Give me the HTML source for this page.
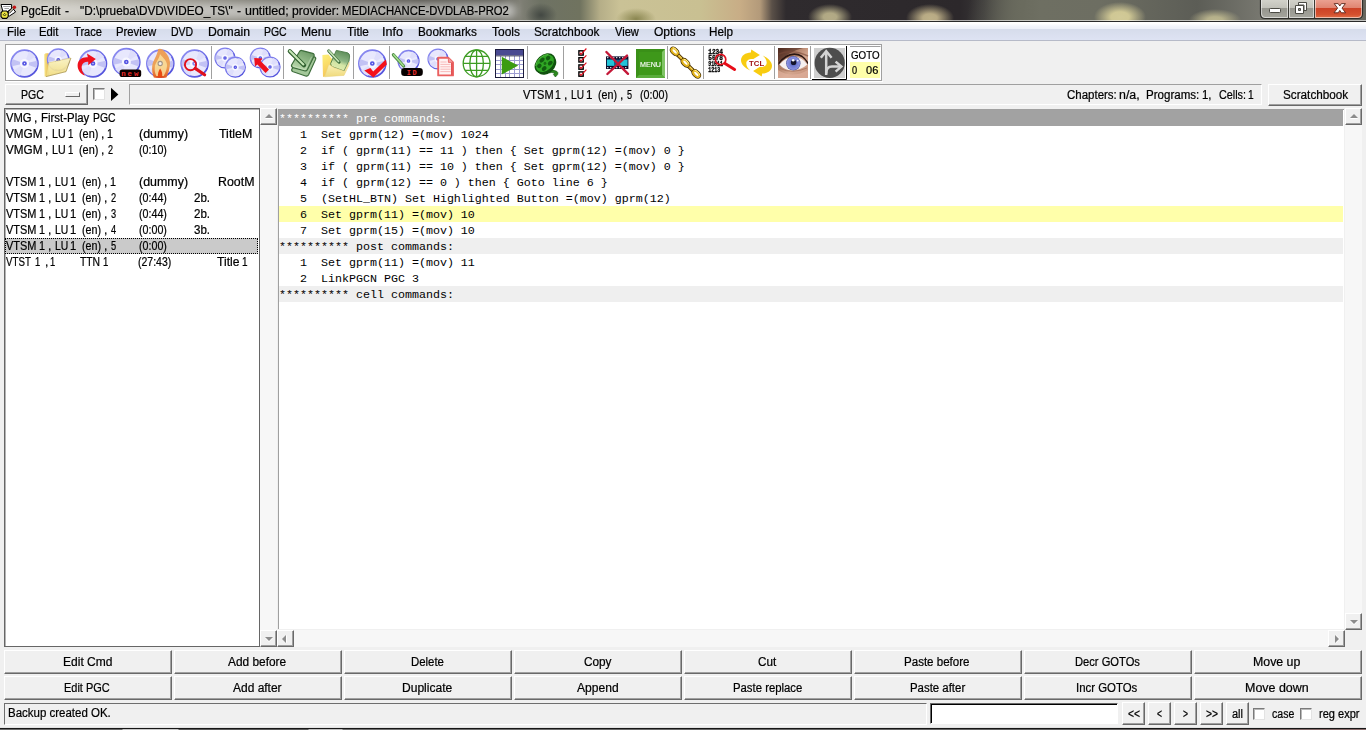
<!DOCTYPE html><html><head><meta charset="utf-8"><title>PgcEdit</title><style>*{box-sizing:border-box;margin:0;padding:0}
html,body{width:1366px;height:730px;overflow:hidden;background:#f0f0f0}
body{position:relative;font-family:"Liberation Sans",sans-serif;font-size:12px;color:#000}
.abs{position:absolute}
.w{position:absolute;white-space:pre;line-height:1;transform-origin:0 0;display:block;-webkit-text-stroke:.22px #000}
#title{left:0;top:0;width:1366px;height:21px;background:
radial-gradient(ellipse 22px 13px at 830px 17px,#b4ab86 0,#b0a884 30%,rgba(176,168,132,0) 100%),
radial-gradient(ellipse 24px 14px at 930px 18px,#bdb088 0,#b8aa84 30%,rgba(184,170,132,0) 100%),
radial-gradient(ellipse 26px 15px at 1120px 17px,#d2ca98 0,#cfc794 35%,rgba(207,199,148,0) 100%),
radial-gradient(ellipse 26px 11px at 1215px 20px,#bab58e 0,#b5b08a 30%,rgba(181,176,138,0) 100%),
radial-gradient(ellipse 16px 12px at 541px 15px,#434843 0,rgba(69,74,69,0) 100%),
radial-gradient(ellipse 20px 11px at 636px 19px,#8a8650 0,rgba(142,138,80,0) 100%),
linear-gradient(100deg,rgba(0,0,0,0) 0,rgba(0,0,0,0) 955px,#6a6b5e 1010px,rgba(106,107,94,0) 1011px),
linear-gradient(90deg,#c4c1b6 0,#bcb9af 60px,#a09d93 150px,#7e7c73 250px,#69675f 340px,#514f48 420px,#5a5951 500px,#7f7f75 520px,#6e7264 540px,#70735f 580px,#b5ae88 600px,#cac296 620px,#c9c092 700px,#c8ad86 740px,#b39a7a 760px,#5a5048 772px,#2f2b2e 786px,#2c282b 960px,#3a3838 985px,#6a6b5e 1022px,#6e6f62 1040px,#6d6e62 1100px,#5c5d56 1197px,#77776f 1260px,#66665e 1366px)}
#tl2{left:0;top:20px;width:1366px;height:1px;background:rgba(255,255,255,.6)}
#tline{left:0;top:21px;width:1366px;height:1px;background:#2a2a2a}
#glow{left:16px;top:3px;width:500px;height:16px;border-radius:8px;background:linear-gradient(90deg,rgba(255,255,255,.35) 0,rgba(255,255,255,.5) 40%,rgba(255,255,255,.58) 100%);filter:blur(4.5px)}
#menubar{left:0;top:22px;width:1366px;height:19px;background:linear-gradient(#ffffff 0,#ffffff 1.5px,#f3f5fb 4px,#eceff8 7px,#d6dceb 7.01px,#dee3f3 18px,#b6bac8 18.01px,#b6bac8 19px)}
.btn{position:absolute;background:#f0f0f0;border:1px solid;border-color:#fff #696969 #696969 #fff;box-shadow:inset -1px -1px 0 #a0a0a0}
.sunk{position:absolute;border:1px solid;border-color:#a0a0a0 #fff #fff #a0a0a0}
.chk{position:absolute;width:12px;height:12px;background:#fff;border:1px solid;border-color:#7a7a7a #e3e3e3 #e3e3e3 #7a7a7a;box-shadow:inset 1px 1px 0 #b8b8b8}
.mono{font-family:"Liberation Mono",monospace;font-size:11.67px}
.row{position:absolute;left:279px;width:1064px;height:16px;line-height:19px;white-space:pre;overflow:hidden}
.sb{position:absolute;background:#f7f7f7}
.sbb{position:absolute;width:17px;height:17px;background:#f0f0f0;border:1px solid;border-color:#fff #696969 #696969 #fff;box-shadow:inset -1px -1px 0 #a0a0a0}
.sep{position:absolute;top:46px;width:1px;height:33px;background:#a0a0a0}
.sbb i{position:absolute;width:0;height:0;border:4px solid transparent}
.au{left:3.5px;top:1px;border-bottom-color:#8c8c8c !important;border-top-width:0 !important;top:5px;filter:drop-shadow(0 1px 0 #fff)}
.ad{left:3.5px;top:6px;border-top-color:#8c8c8c !important;border-bottom-width:0 !important;filter:drop-shadow(0 1px 0 #fff)}
.al{left:4px;top:3.5px;border-right-color:#8c8c8c !important;border-left-width:0 !important;filter:drop-shadow(1px 0 0 #fff)}
.ar{left:6px;top:3.5px;border-left-color:#8c8c8c !important;border-right-width:0 !important;filter:drop-shadow(1px 0 0 #fff)}
</style></head><body>
<div id="title" class="abs"></div><div id="glow" class="abs"></div><div id="tl2" class="abs"></div><div id="tline" class="abs"></div>
<span class="w" style="left:20.95px;top:5px;transform:scaleX(0.9512);">PgcEdit</span>
<span class="w" style="left:64.70px;top:5px;transform:scaleX(1.0020);">-</span>
<span class="w" style="left:79.90px;top:5px;transform:scaleX(0.9788);">&quot;D:\prueba\DVD\VIDEO_TS\&quot;</span>
<span class="w" style="left:237.00px;top:5px;transform:scaleX(1.0020);">-</span>
<span class="w" style="left:244.70px;top:5px;transform:scaleX(1.0390);">untitled;</span>
<span class="w" style="left:292.00px;top:5px;transform:scaleX(1.0109);">provider:</span>
<span class="w" style="left:342.36px;top:5px;transform:scaleX(0.9409);">MEDIACHANCE-DVDLAB-PRO2</span>
<svg class="abs" style="left:1256px;top:0" width="110" height="21" viewBox="1256 0 110 21">
<defs>
<linearGradient id="cb1" x1="0" y1="0" x2="0" y2="1"><stop offset="0" stop-color="#d4d4cc"/><stop offset="0.44" stop-color="#c2c2ba"/><stop offset="0.46" stop-color="#96968e"/><stop offset="1" stop-color="#a6a69e"/></linearGradient>
<linearGradient id="cb2" x1="0" y1="0" x2="0" y2="1"><stop offset="0" stop-color="#eaa090"/><stop offset="0.44" stop-color="#e08470"/><stop offset="0.46" stop-color="#cc4226"/><stop offset="0.8" stop-color="#d4502e"/><stop offset="1" stop-color="#e07048"/></linearGradient>
</defs>
<path d="M1260.5 -1 V14 Q1260.5 18.5 1265 18.5 H1358 Q1362.5 18.5 1362.5 14 V-1 Z" fill="url(#cb1)"/>
<path d="M1314.5 0 H1362 V14 Q1362 18 1358 18 H1314.5 Z" fill="url(#cb2)"/>
<path d="M1260.5 -1 V14 Q1260.5 18.5 1265 18.5 H1358 Q1362.5 18.5 1362.5 14 V-1" fill="none" stroke="#2e2e2a" stroke-width="1.2"/>
<path d="M1288.5 0 V18 M1314.5 0 V18" stroke="#3a3a34" stroke-width="1"/>
<path d="M1261.5 0 V14 Q1261.5 17.5 1265 17.5 H1287.5 V0 M1289.5 0 V17.5 H1313.5 V0 M1315.5 0 V17.5 H1358 Q1361.5 17.5 1361.5 14 V0" fill="none" stroke="rgba(255,255,255,.55)" stroke-width="1"/>
<rect x="1269.5" y="8.5" width="11" height="4" rx=".8" fill="#fff" stroke="#4a4a44" stroke-width="1"/>
<path d="M1298.5 2.5 H1306.5 V10.5 H1304 V5 H1298.5 Z" fill="#fff" stroke="#4a4a44" stroke-width="1"/>
<path d="M1295.5 5.5 H1303.5 V13.5 H1295.5 Z M1298.5 8.5 V10.5 H1300.5 V8.5 Z" fill="#fff" fill-rule="evenodd" stroke="#4a4a44" stroke-width="1"/>
<path d="M1334.2 3.6 L1338.2 3.6 L1339.8 6 L1341.4 3.6 L1345.4 3.6 L1342 8.1 L1345.6 12.8 L1341.4 12.8 L1339.8 10.4 L1338.2 12.8 L1334 12.8 L1337.6 8.1 Z" fill="#fff" stroke="#5a2418" stroke-width=".9" stroke-linejoin="round"/>
</svg>
<svg class="abs" style="left:0;top:3px" width="19" height="18" viewBox="0 3 19 18">
<path d="M1 4.5 H11.6 V8.4 L7 12 H3 Z" fill="#fff" stroke="#000" stroke-width="1"/>
<path d="M3.2 6.5 H10.6 M4.4 8.5 H9" stroke="#9a9a9a" stroke-width=".9"/>
<path d="M8.6 11.4 L13.4 9 L15.6 12 L9.4 16 L7.6 15.4 Z" fill="#fff" stroke="#000" stroke-width="1"/>
<path d="M8.8 12.6 L13.6 8" stroke="#000" stroke-width="2.4"/><path d="M8.8 12.6 L13.4 8.2" stroke="#f4e8d0" stroke-width="1.1"/>
<circle cx="14.4" cy="7.3" r="1.7" fill="#c41414"/>
<path d="M2.6 11 H6.6 L8.2 12.8 V16.6 L6.6 18.4 H2.6 L1 16.6 V12.8 Z" fill="#ece440" stroke="#000" stroke-width="1.1"/>
<path d="M4.6 13.4 L5.9 14.7 L4.6 16 L3.3 14.7 Z" fill="#ece440" stroke="#000" stroke-width=".7"/>
</svg>
<div id="menubar" class="abs"></div>
<span class="w" style="left:6.64px;top:26px;transform:scaleX(0.9611);">File</span>
<span class="w" style="left:38.86px;top:26px;transform:scaleX(0.9400);">Edit</span>
<span class="w" style="left:74.00px;top:26px;transform:scaleX(0.9267);">Trace</span>
<span class="w" style="left:115.86px;top:26px;transform:scaleX(0.9429);">Preview</span>
<span class="w" style="left:171.12px;top:26px;transform:scaleX(0.8750);">DVD</span>
<span class="w" style="left:207.78px;top:26px;transform:scaleX(1.0175);">Domain</span>
<span class="w" style="left:264.03px;top:26px;transform:scaleX(0.8720);">PGC</span>
<span class="w" style="left:300.99px;top:26px;transform:scaleX(1.0103);">Menu</span>
<span class="w" style="left:347.10px;top:26px;transform:scaleX(0.9864);">Title</span>
<span class="w" style="left:382.15px;top:26px;transform:scaleX(1.0474);">Info</span>
<span class="w" style="left:417.82px;top:26px;transform:scaleX(0.9797);">Bookmarks</span>
<span class="w" style="left:491.60px;top:26px;transform:scaleX(0.9964);">Tools</span>
<span class="w" style="left:534.00px;top:26px;transform:scaleX(0.9806);">Scratchbook</span>
<span class="w" style="left:614.60px;top:26px;transform:scaleX(0.9269);">View</span>
<span class="w" style="left:653.70px;top:26px;transform:scaleX(1.0024);">Options</span>
<span class="w" style="left:708.92px;top:26px;transform:scaleX(0.9750);">Help</span>
<div class="abs" style="left:5px;top:44px;width:877px;height:37px;background:#fff;border:1px solid #a0a0a0"></div>
<div class="sep" style="left:211px"></div>
<div class="sep" style="left:283px"></div>
<div class="sep" style="left:353px"></div>
<div class="sep" style="left:389px"></div>
<div class="sep" style="left:527px"></div>
<div class="sep" style="left:563px"></div>
<div class="sep" style="left:667px"></div>
<div class="sep" style="left:703px"></div>
<div class="sep" style="left:774px"></div>
<div class="sep" style="left:810px"></div>
<div class="abs" style="left:5px;top:81px;width:878px;height:1px;background:#fff"></div>
<svg class="abs" style="left:0;top:44px" width="890" height="38" viewBox="0 44 890 38">
<defs>
<linearGradient id="ring" x1="0" y1="0" x2="1" y2="1"><stop offset="0" stop-color="#9494f2"/><stop offset="0.5" stop-color="#6c6ce8"/><stop offset="1" stop-color="#4a4ad8"/></linearGradient>
<linearGradient id="foldb" x1="0" y1="0" x2="1" y2="0"><stop offset="0" stop-color="#f8e88c"/><stop offset="0.6" stop-color="#f0cc66"/><stop offset="1" stop-color="#e2aa48"/></linearGradient>
<linearGradient id="fold" x1="0" y1="0" x2="0" y2="1"><stop offset="0" stop-color="#fcf6c4"/><stop offset="1" stop-color="#f0da7c"/></linearGradient>
<linearGradient id="flame" x1="0" y1="0" x2="0" y2="1"><stop offset="0" stop-color="#ee9a50"/><stop offset="0.6" stop-color="#eea050"/><stop offset="1" stop-color="#e65a18"/></linearGradient>
<linearGradient id="pad" x1="0.7" y1="0" x2="0.2" y2="1"><stop offset="0" stop-color="#6c9a66"/><stop offset="0.5" stop-color="#94bc8a"/><stop offset="1" stop-color="#c6e2b8"/></linearGradient>
<linearGradient id="pad2" x1="0.6" y1="0" x2="0.3" y2="1"><stop offset="0" stop-color="#5c8c58"/><stop offset="0.45" stop-color="#8ab482"/><stop offset="0.65" stop-color="#d4e6a6"/><stop offset="1" stop-color="#e4eeb0"/></linearGradient>
<linearGradient id="foldc" x1="0" y1="0" x2="0.3" y2="1"><stop offset="0" stop-color="#fdf078"/><stop offset="1" stop-color="#f6c658"/></linearGradient>
<linearGradient id="skin" x1="0" y1="0" x2="1" y2="1"><stop offset="0" stop-color="#5c3426"/><stop offset="0.3" stop-color="#a87860"/><stop offset="0.6" stop-color="#d4a68e"/><stop offset="1" stop-color="#c48e78"/></linearGradient>
<radialGradient id="iris"><stop offset="0" stop-color="#3a4690"/><stop offset="0.4" stop-color="#6c78d0"/><stop offset="0.85" stop-color="#8890e0"/><stop offset="1" stop-color="#4a5498"/></radialGradient>
<linearGradient id="gold" x1="0" y1="0" x2="1" y2="0"><stop offset="0" stop-color="#fff08a"/><stop offset="0.5" stop-color="#e0b020"/><stop offset="1" stop-color="#8a6200"/></linearGradient>
</defs>
<g transform="translate(24.5,63.5)"> <circle r="13.4" fill="#e8e8fd" stroke="url(#ring)" stroke-width="1.8"/> <path d="M0 0 L-12.8 2.7 A13.1 13.1 0 0 1 -12.3 -4.5 Z" fill="#c2c2f4"/> <path d="M0 0 L12.8 -2.7 A13.1 13.1 0 0 1 12.3 4.5 Z" fill="#c2c2f4"/> <path d="M0 0 L4.5 -12.3 A13.1 13.1 0 0 1 11.1 -6.9 Z" fill="#dedefb"/> <path d="M0 0 L-4.5 12.3 A13.1 13.1 0 0 1 -11.1 6.9 Z" fill="#dedefb"/> <circle r="4.5" fill="#f7f7ff"/> <circle r="1.5" fill="#e8e8ff" stroke="#5252e2" stroke-width="1.7"/></g>
<path d="M44.2 54.4 L45.6 53.2 L48.6 53.2 L48.8 75 L46 76.6 L44.6 76.4 Z" fill="url(#foldb)"/>
<g transform="translate(58.3,59.8) scale(1.08)"> <circle r="9.9" fill="#e8e8fd" stroke="url(#ring)" stroke-width="1.4"/> <path d="M0 0 L-9.5 2 A9.7 9.7 0 0 1 -9.1 -3.3 Z" fill="#c2c2f4"/> <path d="M0 0 L9.5 -2 A9.7 9.7 0 0 1 9.1 3.3 Z" fill="#c2c2f4"/> <path d="M0 0 L3.3 -9.1 A9.7 9.7 0 0 1 8.2 -5.1 Z" fill="#dedefb"/> <path d="M0 0 L-3.3 9.1 A9.7 9.7 0 0 1 -8.2 5.1 Z" fill="#dedefb"/> <circle r="3.3" fill="#f7f7ff"/> <circle r="1.1" fill="#e8e8ff" stroke="#5252e2" stroke-width="1.3"/></g>
<path d="M46 76.6 L48.7 62.8 L70.9 58 L66 71.6 Z" fill="url(#fold)" fill-opacity=".93" stroke="#e2c868" stroke-width=".5"/>
<path d="M70.9 58 L66 71.6 L46 76.6" fill="none" stroke="#8a7840" stroke-width=".7" opacity=".75"/>
<path d="M55.6 61.4 Q56.6 59.4 58.6 59.6 Q59.6 60 60.4 60.4" fill="none" stroke="#8a86a8" stroke-width=".8"/>
<g transform="translate(93,63.5)"> <circle r="13.4" fill="#e8e8fd" stroke="url(#ring)" stroke-width="1.8"/> <path d="M0 0 L-12.8 2.7 A13.1 13.1 0 0 1 -12.3 -4.5 Z" fill="#c2c2f4"/> <path d="M0 0 L12.8 -2.7 A13.1 13.1 0 0 1 12.3 4.5 Z" fill="#c2c2f4"/> <path d="M0 0 L4.5 -12.3 A13.1 13.1 0 0 1 11.1 -6.9 Z" fill="#dedefb"/> <path d="M0 0 L-4.5 12.3 A13.1 13.1 0 0 1 -11.1 6.9 Z" fill="#dedefb"/> <circle r="4.5" fill="#f7f7ff"/> <circle r="1.5" fill="#e8e8ff" stroke="#5252e2" stroke-width="1.7"/></g>
<path d="M95.8 59 L87 53.6 L87.8 57.2 C82.4 56.6 77.6 60 77.6 65.4 C77.6 70 80.6 73.8 85 75.6 C82.4 72.2 81 68.6 81.8 65.8 C82.6 63 85 61.6 88.2 61.8 L88.2 65.2 Z" fill="#f0101c"/>
<g transform="translate(126.3,62)"> <circle r="13.4" fill="#e8e8fd" stroke="url(#ring)" stroke-width="1.8"/> <path d="M0 0 L-12.8 2.7 A13.1 13.1 0 0 1 -12.3 -4.5 Z" fill="#c2c2f4"/> <path d="M0 0 L12.8 -2.7 A13.1 13.1 0 0 1 12.3 4.5 Z" fill="#c2c2f4"/> <path d="M0 0 L4.5 -12.3 A13.1 13.1 0 0 1 11.1 -6.9 Z" fill="#dedefb"/> <path d="M0 0 L-4.5 12.3 A13.1 13.1 0 0 1 -11.1 6.9 Z" fill="#dedefb"/> <circle r="4.5" fill="#f7f7ff"/> <circle r="1.5" fill="#e8e8ff" stroke="#5252e2" stroke-width="1.7"/></g>
<rect x="119.6" y="69.4" width="21.6" height="7.6" rx="2.6" fill="#0a0000"/>
<text x="130.8" y="75.5" text-anchor="middle" font-family="Liberation Mono,monospace" font-weight="bold" font-size="7.4" letter-spacing="1.9" fill="#f22c2c">new</text>
<g transform="translate(160.3,63.5)"> <circle r="13.4" fill="#e8e8fd" stroke="url(#ring)" stroke-width="1.8"/> <path d="M0 0 L-12.8 2.7 A13.1 13.1 0 0 1 -12.3 -4.5 Z" fill="#c2c2f4"/> <path d="M0 0 L12.8 -2.7 A13.1 13.1 0 0 1 12.3 4.5 Z" fill="#c2c2f4"/> <path d="M0 0 L4.5 -12.3 A13.1 13.1 0 0 1 11.1 -6.9 Z" fill="#dedefb"/> <path d="M0 0 L-4.5 12.3 A13.1 13.1 0 0 1 -11.1 6.9 Z" fill="#dedefb"/> <circle r="4.5" fill="#f7f7ff"/> <circle r="1.5" fill="#e8e8ff" stroke="#5252e2" stroke-width="1.7"/></g>
<path d="M157.6 49.4 Q159.6 48 162.4 49.4 C166.4 52.6 170.2 57.4 170 63.4 C169.8 69.6 167.6 74.4 166.4 77.6 L153.8 77.6 C152.4 74 151.8 70 152.2 66 C152.8 60.6 157 56.4 158.2 49 Z" fill="url(#flame)" opacity=".95"/>
<path d="M160 54 C163 58 167.4 60.6 167 66 C166.6 70.6 165 73.6 163.6 76 L156.4 76 C155 73.4 154.4 70.4 154.8 67 C155.4 62.4 159 59.6 160 54 Z" fill="#fae4a4" opacity=".8"/>
<circle cx="160.2" cy="63.5" r="2.1" fill="#f4f0ec" stroke="#a09488" stroke-width="1.1"/>
<path d="M158 77.6 C157.4 73.6 158.6 70.6 160.2 68.4 C161.8 70.8 162.8 73.8 162 77.6 Z" fill="#ea4a10"/>
<path d="M153.8 77.8 Q160 75.4 166.4 77.8 Z" fill="#e8400c" opacity=".8"/>
<g transform="translate(194.6,63.5)"> <circle r="13.4" fill="#e8e8fd" stroke="url(#ring)" stroke-width="1.8"/> <path d="M0 0 L-12.8 2.7 A13.1 13.1 0 0 1 -12.3 -4.5 Z" fill="#c2c2f4"/> <path d="M0 0 L12.8 -2.7 A13.1 13.1 0 0 1 12.3 4.5 Z" fill="#c2c2f4"/> <path d="M0 0 L4.5 -12.3 A13.1 13.1 0 0 1 11.1 -6.9 Z" fill="#dedefb"/> <path d="M0 0 L-4.5 12.3 A13.1 13.1 0 0 1 -11.1 6.9 Z" fill="#dedefb"/> <circle r="4.5" fill="#f7f7ff"/> <circle r="1.5" fill="#e8e8ff" stroke="#5252e2" stroke-width="1.7"/></g>
<circle cx="190.5" cy="64.7" r="5.6" fill="rgba(255,255,255,.3)" stroke="#e0101c" stroke-width="1.9"/>
<path d="M195.2 68.4 L204.6 74.8" stroke="#e0101c" stroke-width="3.2" stroke-linecap="round"/>
<g transform="translate(225,58)"> <circle r="9.9" fill="#e8e8fd" stroke="url(#ring)" stroke-width="1.4"/> <path d="M0 0 L-9.5 2 A9.7 9.7 0 0 1 -9.1 -3.3 Z" fill="#c2c2f4"/> <path d="M0 0 L9.5 -2 A9.7 9.7 0 0 1 9.1 3.3 Z" fill="#c2c2f4"/> <path d="M0 0 L3.3 -9.1 A9.7 9.7 0 0 1 8.2 -5.1 Z" fill="#dedefb"/> <path d="M0 0 L-3.3 9.1 A9.7 9.7 0 0 1 -8.2 5.1 Z" fill="#dedefb"/> <circle r="3.3" fill="#f7f7ff"/> <circle r="1.1" fill="#e8e8ff" stroke="#5252e2" stroke-width="1.3"/></g><g transform="translate(235.3,67.2)"> <circle r="9.9" fill="#e8e8fd" stroke="url(#ring)" stroke-width="1.4"/> <path d="M0 0 L-9.5 2 A9.7 9.7 0 0 1 -9.1 -3.3 Z" fill="#c2c2f4"/> <path d="M0 0 L9.5 -2 A9.7 9.7 0 0 1 9.1 3.3 Z" fill="#c2c2f4"/> <path d="M0 0 L3.3 -9.1 A9.7 9.7 0 0 1 8.2 -5.1 Z" fill="#dedefb"/> <path d="M0 0 L-3.3 9.1 A9.7 9.7 0 0 1 -8.2 5.1 Z" fill="#dedefb"/> <circle r="3.3" fill="#f7f7ff"/> <circle r="1.1" fill="#e8e8ff" stroke="#5252e2" stroke-width="1.3"/></g>
<g transform="translate(260.3,58)"> <circle r="9.9" fill="#e8e8fd" stroke="url(#ring)" stroke-width="1.4"/> <path d="M0 0 L-9.5 2 A9.7 9.7 0 0 1 -9.1 -3.3 Z" fill="#c2c2f4"/> <path d="M0 0 L9.5 -2 A9.7 9.7 0 0 1 9.1 3.3 Z" fill="#c2c2f4"/> <path d="M0 0 L3.3 -9.1 A9.7 9.7 0 0 1 8.2 -5.1 Z" fill="#dedefb"/> <path d="M0 0 L-3.3 9.1 A9.7 9.7 0 0 1 -8.2 5.1 Z" fill="#dedefb"/> <circle r="3.3" fill="#f7f7ff"/> <circle r="1.1" fill="#e8e8ff" stroke="#5252e2" stroke-width="1.3"/></g><g transform="translate(270,67)"> <circle r="9.9" fill="#e8e8fd" stroke="url(#ring)" stroke-width="1.4"/> <path d="M0 0 L-9.5 2 A9.7 9.7 0 0 1 -9.1 -3.3 Z" fill="#c2c2f4"/> <path d="M0 0 L9.5 -2 A9.7 9.7 0 0 1 9.1 3.3 Z" fill="#c2c2f4"/> <path d="M0 0 L3.3 -9.1 A9.7 9.7 0 0 1 8.2 -5.1 Z" fill="#dedefb"/> <path d="M0 0 L-3.3 9.1 A9.7 9.7 0 0 1 -8.2 5.1 Z" fill="#dedefb"/> <circle r="3.3" fill="#f7f7ff"/> <circle r="1.1" fill="#e8e8ff" stroke="#5252e2" stroke-width="1.3"/></g>
<path d="M254.2 58 L262.6 58.6 L260.6 61 L269 69.4 L265.6 73 L257.4 64.4 L255 66.6 Z" fill="#ee101c"/>
<path d="M301.6 54.6 Q302.2 53.4 303.6 53.8 L314.2 56.8 Q316.2 57.6 315.6 59.4 L308.6 74.8 Q307.6 76.6 305.6 76 L293.2 71.8 Q291.2 71 291.8 69.2 Z" fill="#a4c89a" stroke="#3e6e3c" stroke-width="1.2"/>
<path d="M299.4 51.8 Q300.2 50 302.2 50.6 L312.6 53.4 Q314.8 54.2 314 56.2 L307.4 69.6 Q306.4 71.4 304.4 70.8 L293 67.6 Q291 66.8 291.6 65 Z" fill="url(#pad)" stroke="#3e6e3c" stroke-width="1.2"/>
<path d="M293.2 66.4 L305.2 69.8 L311.6 56.8" fill="none" stroke="#d6ead0" stroke-width=".8" opacity=".6"/>
<path d="M289.8 51.2 L304 65.2" stroke="#2e5e2e" stroke-width="4.2" stroke-linecap="round"/>
<path d="M289.8 50.9 L303.4 64.4" stroke="#c6e6b6" stroke-width="2.1" stroke-linecap="round"/>
<path d="M322.4 55 L328.6 54.4 L331.6 58.6 L336 62 L331.6 74 L323 77 Z" fill="url(#foldc)"/>
<path d="M336.3 50.4 L347.6 52.8 Q349.6 53.6 349.6 56 L349 61 L344 71 L331.4 66.4 L330.6 63.6 Z" fill="url(#pad2)" stroke="#4c7c48" stroke-width=".9" stroke-linejoin="round"/>
<path d="M324.5 76.8 L328.8 64.4 L334 67.6 L344.6 71.2 L349.2 62 L349 65 L344 75.4 Z" fill="url(#fold)" stroke="#e8d078" stroke-width=".5"/>
<path d="M328.8 51 L339 62" stroke="#3a6a38" stroke-width="3.2" stroke-linecap="round"/>
<path d="M328.9 50.9 L338.6 61.4" stroke="#c2e2b2" stroke-width="1.6" stroke-linecap="round"/>
<g transform="translate(372.3,63.5)"> <circle r="13.4" fill="#e8e8fd" stroke="url(#ring)" stroke-width="1.8"/> <path d="M0 0 L-12.8 2.7 A13.1 13.1 0 0 1 -12.3 -4.5 Z" fill="#c2c2f4"/> <path d="M0 0 L12.8 -2.7 A13.1 13.1 0 0 1 12.3 4.5 Z" fill="#c2c2f4"/> <path d="M0 0 L4.5 -12.3 A13.1 13.1 0 0 1 11.1 -6.9 Z" fill="#dedefb"/> <path d="M0 0 L-4.5 12.3 A13.1 13.1 0 0 1 -11.1 6.9 Z" fill="#dedefb"/> <circle r="4.5" fill="#f7f7ff"/> <circle r="1.5" fill="#e8e8ff" stroke="#5252e2" stroke-width="1.7"/></g>
<path d="M364.3 70.6 L370.4 68 L373.2 71.6 L385.8 59.4 L386.8 64.4 L373.4 77.4 Z" fill="#f4101a"/>
<g transform="translate(408.5,61) scale(1.05)"> <circle r="9.9" fill="#e8e8fd" stroke="url(#ring)" stroke-width="1.4"/> <path d="M0 0 L-9.5 2 A9.7 9.7 0 0 1 -9.1 -3.3 Z" fill="#c2c2f4"/> <path d="M0 0 L9.5 -2 A9.7 9.7 0 0 1 9.1 3.3 Z" fill="#c2c2f4"/> <path d="M0 0 L3.3 -9.1 A9.7 9.7 0 0 1 8.2 -5.1 Z" fill="#dedefb"/> <path d="M0 0 L-3.3 9.1 A9.7 9.7 0 0 1 -8.2 5.1 Z" fill="#dedefb"/> <circle r="3.3" fill="#f7f7ff"/> <circle r="1.1" fill="#e8e8ff" stroke="#5252e2" stroke-width="1.3"/></g>
<path d="M393.4 54.8 L403.6 66" stroke="#4e8a44" stroke-width="3.2" stroke-linecap="round"/>
<path d="M393.6 54.8 L403.2 65.6" stroke="#a4e090" stroke-width="1.5" stroke-linecap="round"/>
<rect x="401.2" y="68" width="21.6" height="8" rx="3.2" fill="#060000"/>
<text x="412.4" y="74.6" text-anchor="middle" font-family="Liberation Mono,monospace" font-weight="bold" font-size="6.8" letter-spacing="1.5" fill="#f22c2c">ID</text>
<g transform="translate(438,59)"> <circle r="9.9" fill="#e8e8fd" stroke="url(#ring)" stroke-width="1.4"/> <path d="M0 0 L-9.5 2 A9.7 9.7 0 0 1 -9.1 -3.3 Z" fill="#c2c2f4"/> <path d="M0 0 L9.5 -2 A9.7 9.7 0 0 1 9.1 3.3 Z" fill="#c2c2f4"/> <path d="M0 0 L3.3 -9.1 A9.7 9.7 0 0 1 8.2 -5.1 Z" fill="#dedefb"/> <path d="M0 0 L-3.3 9.1 A9.7 9.7 0 0 1 -8.2 5.1 Z" fill="#dedefb"/> <circle r="3.3" fill="#f7f7ff"/> <circle r="1.1" fill="#e8e8ff" stroke="#5252e2" stroke-width="1.3"/></g>
<path d="M438.2 57.8 L448.4 57.8 L453 62.4 L453 75.4 L438.2 75.4 Z" fill="#fff4f4" stroke="#ea6060" stroke-width="1.9" stroke-linejoin="round"/><path d="M451.8 62.6 V75" stroke="#e25252" stroke-width="1.6"/>
<path d="M448.4 57.8 L448.4 62.4 L453 62.4" fill="#f4a0a0" stroke="#e86464" stroke-width=".9"/>
<path d="M440.4 64.4 H450.6 M440.4 66.8 H450.6 M440.4 69.2 H450.6 M440.4 71.6 H450.6 M440.4 62 H446.6" stroke="#f6b4b4" stroke-width=".9"/>
<g fill="none" stroke="#3c9c22" stroke-width="1.3"><circle cx="476.6" cy="63.4" r="13.4" fill="#fff"/><ellipse cx="476.6" cy="63.4" rx="6.8" ry="13.4"/><path d="M476.6 50 V76.8 M463.2 63.4 H490 M465.2 56.4 H488 M465.2 70.4 H488"/></g>
<rect x="495.5" y="49.5" width="28" height="28" fill="#fff" stroke="#1c1c3c" stroke-width="1"/>
<rect x="496" y="50" width="27" height="5.4" fill="#4a4a92"/>
<path d="M500.5 56 V77 M505.5 56 V77 M509.5 56 V77 M514.5 56 V77 M519.5 56 V77 M496 60.5 H523 M496 64.5 H523 M496 69.5 H523 M496 73.5 H523" stroke="#9c9cd2" stroke-width="1"/>
<path d="M496 55.9 H523" stroke="#1c1c3c" stroke-width=".8"/>
<path d="M501.8 56.8 L518.2 65.6 L501.8 74.6 Z" fill="#3c9c12"/>
<path d="M547.6 70 Q552.6 69.4 556.6 71.2 Q558.8 72.6 557.6 74.6 L555.4 77 L553.4 74.4 L554.6 73 Q551.6 72 548.8 73 Z" fill="#2a8a1c" stroke="#145010" stroke-width=".6"/>
<g transform="translate(545,63.4) rotate(-42)"><ellipse cx="-.2" cy="2.6" rx="11" ry="7.8" fill="#115210"/><ellipse rx="11" ry="7.8" fill="#2fa624" stroke="#125410" stroke-width="1.5"/><g fill="#125c10"><ellipse cx="0" cy="-4.4" rx="2.9" ry="1.9"/><ellipse cx="5.9" cy="-1.9" rx="2.4" ry="2.1"/><ellipse cx="4.1" cy="3.3" rx="2.7" ry="2"/><ellipse cx="-4.1" cy="3.3" rx="2.7" ry="2"/><ellipse cx="-5.9" cy="-1.9" rx="2.4" ry="2.1"/></g><path d="M-8.6 -4.4 A11 7.8 0 0 1 8.6 -4.4" fill="none" stroke="#66d250" stroke-width=".9" opacity=".85"/><circle r="1.5" fill="#1a6c14"/></g>
<rect x="578.9" y="50.8" width="4.3" height="4.3" fill="#fff" stroke="#000" stroke-width="1.4"/>
<path d="M579.8 52.7 L581 54.3 L586.4 48.5" fill="none" stroke="#e00c1c" stroke-width="1.15"/>
<rect x="578.9" y="57.7" width="4.3" height="4.3" fill="#fff" stroke="#000" stroke-width="1.4"/>
<path d="M579.8 59.6 L581 61.2 L586.4 55.4" fill="none" stroke="#e00c1c" stroke-width="1.15"/>
<rect x="578.9" y="64.9" width="4.3" height="4.3" fill="#fff" stroke="#000" stroke-width="1.4"/>
<path d="M579.8 66.8 L581 68.4 L586.4 62.6" fill="none" stroke="#e00c1c" stroke-width="1.15"/>
<rect x="578.9" y="71.9" width="4.3" height="4.3" fill="#fff" stroke="#000" stroke-width="1.4"/>
<path d="M579.8 73.8 L581 75.4 L586.4 69.6" fill="none" stroke="#e00c1c" stroke-width="1.15"/>
<rect x="606" y="56.4" width="22.4" height="12.6" fill="#0c0c2a"/>
<rect x="606.6" y="59.4" width="21.2" height="6.6" fill="#0c3c68"/><rect x="607" y="59.6" width="7.4" height="6.2" fill="#22c4d8"/><rect x="620" y="59.6" width="7.4" height="6.2" fill="#22c4d8"/><rect x="614.4" y="60" width="5.6" height="5.4" fill="#10688c"/>
<path d="M607 57.7 H628 M607 67.7 H628" stroke="#fff" stroke-width="1" stroke-dasharray="1.4 1.6"/>
<path d="M606.4 52 L628 73.8 M627 55.6 L607.4 74" stroke="#c41838" stroke-width="2.4" stroke-linecap="round"/>
<rect x="636" y="49" width="29" height="29" fill="#3e981a"/>
<path d="M636 49 H665 L662 52 H639 V75 L636 78 Z" fill="#3a9018"/><path d="M665 49 V78 L662 75 V52 Z" fill="#80c466"/><path d="M665 78 H636 L639 75 H662 Z" fill="#5aac3c"/>
<text opacity=".99" x="650.5" y="66.6" text-anchor="middle" font-family="Liberation Sans,sans-serif" font-size="7.2" fill="#ffffff" stroke="#fff" stroke-width=".12" textLength="21" lengthAdjust="spacingAndGlyphs">MENU</text>
<g fill="none" stroke-linecap="round">
<path d="M677.4 54.5 L682.6 59.7" stroke="#4a3000" stroke-width="4"/><path d="M677.4 54.5 L682.6 59.7" stroke="#d8a414" stroke-width="2.4"/><path d="M677.6 54.1 L682.8 59.300000000000004" stroke="#fff08a" stroke-width=".8"/>
<path d="M688.3 65.80000000000001 L693.5 71.0" stroke="#4a3000" stroke-width="4"/><path d="M688.3 65.80000000000001 L693.5 71.0" stroke="#d8a414" stroke-width="2.4"/><path d="M688.5 65.4 L693.6999999999999 70.60000000000001" stroke="#fff08a" stroke-width=".8"/>
<g transform="translate(674.6,51.4) rotate(45)"><ellipse rx="3.9" ry="2.1" stroke="#3a2400" stroke-width="3.2"/><ellipse rx="3.9" ry="2.1" stroke="#e4b41c" stroke-width="2" fill="#fff"/><path d="M-3.4 -1.6 A3.9 2.1 0 0 1 2.8 -1.9" stroke="#fff49a" stroke-width=".9"/></g>
<g transform="translate(685.4,62.8) rotate(45)"><ellipse rx="3.9" ry="2.1" stroke="#3a2400" stroke-width="3.2"/><ellipse rx="3.9" ry="2.1" stroke="#e4b41c" stroke-width="2" fill="#fff"/><path d="M-3.4 -1.6 A3.9 2.1 0 0 1 2.8 -1.9" stroke="#fff49a" stroke-width=".9"/></g>
<g transform="translate(696.3,73.9) rotate(45)"><ellipse rx="3.9" ry="2.1" stroke="#3a2400" stroke-width="3.2"/><ellipse rx="3.9" ry="2.1" stroke="#e4b41c" stroke-width="2" fill="#fff"/><path d="M-3.4 -1.6 A3.9 2.1 0 0 1 2.8 -1.9" stroke="#fff49a" stroke-width=".9"/></g>
</g>
<text opacity=".99" x="708.2" y="53.6" font-family="Liberation Mono,monospace" font-weight="bold" font-size="6.6" fill="#000" stroke="#000" stroke-width=".3" textLength="14.8" lengthAdjust="spacingAndGlyphs">1234</text>
<text opacity=".99" x="708.2" y="59.8" font-family="Liberation Mono,monospace" font-weight="bold" font-size="6.6" fill="#000" stroke="#000" stroke-width=".3" textLength="14.8" lengthAdjust="spacingAndGlyphs">5678</text>
<text opacity=".99" x="708.2" y="65.5" font-family="Liberation Mono,monospace" font-weight="bold" font-size="6.6" fill="#000" stroke="#000" stroke-width=".3" textLength="14.8" lengthAdjust="spacingAndGlyphs">91011</text>
<text opacity=".99" x="708.2" y="71.8" font-family="Liberation Mono,monospace" font-weight="bold" font-size="6.6" fill="#000" stroke="#000" stroke-width=".3" textLength="12" lengthAdjust="spacingAndGlyphs">1213</text>
<circle cx="720.6" cy="59.5" r="5.2" fill="none" stroke="#e0101c" stroke-width="1.7"/>
<path d="M725 63.4 L734.6 69.4" stroke="#e80c18" stroke-width="3" stroke-linecap="round"/>
<g fill="#f8cc10"><path d="M750.3 70.6 C745 68 741 64.5 741 60.3 C741 55.5 745.5 52.6 750.8 52.4 L751.3 49.5 L759.9 55.1 L753.4 59 C749.5 58.6 746.4 60.2 746.3 63 C746.2 66 748 68.6 750.3 70.6 Z"/><path d="M750.3 70.6 C745 68 741 64.5 741 60.3 C741 55.5 745.5 52.6 750.8 52.4 L751.3 49.5 L759.9 55.1 L753.4 59 C749.5 58.6 746.4 60.2 746.3 63 C746.2 66 748 68.6 750.3 70.6 Z" transform="rotate(180 756.5 63)"/></g>
<text opacity=".99" x="756.6" y="66" text-anchor="middle" font-family="Liberation Sans,sans-serif" font-weight="bold" font-size="7" fill="#a01014" textLength="15" lengthAdjust="spacingAndGlyphs">TCL</text>
<g><rect x="778" y="48" width="30" height="30" fill="url(#skin)"/><path d="M778 48 H803 Q790 51 778 62 Z" fill="#3c1c14" opacity=".5"/><path d="M778 70 Q792 79 808 70 V78 H778 Z" fill="#e0b09c" opacity=".7"/><path d="M779.4 64.4 Q786 57 794 56.6 Q802 57 807.4 64.6 Q801 70.2 792 70.6 Q784 70 779.4 64.4 Z" fill="#f6f0f0"/><circle cx="793.3" cy="63.3" r="7.2" fill="url(#iris)"/><circle cx="793.6" cy="62.4" r="2.7" fill="#14142c"/><circle cx="793.2" cy="60.2" r="1.3" fill="#fff"/><circle cx="797.7" cy="60.6" r=".9" fill="#f0f0ff"/><path d="M778.4 65 Q785.6 55.4 794.4 55 Q803.4 55.4 808 64.4 L808 62 Q803 53.4 794.2 53.2 Q785 53.6 778.4 62.6 Z" fill="#2a1612"/><path d="M779 54 Q792 48.6 808 56" fill="none" stroke="#7a4a38" stroke-width="1.6" opacity=".6"/><path d="M780 68.4 Q792 74.4 807 68" fill="none" stroke="#a06c58" stroke-width=".9" opacity=".8"/></g>
<rect x="812" y="46" width="35" height="34" fill="#fff"/><rect x="814" y="48" width="31" height="30" fill="#cfcfcf"/><path d="M846.5 46 V79.5 H812" fill="none" stroke="#000" stroke-width="1"/>
<circle cx="829.7" cy="62.9" r="15.1" fill="#4d4d4d"/>
<g fill="none" stroke="#d4d4d4" stroke-width="2.5"><path d="M826.2 75 V52"/><path d="M820.8 57.8 L826.2 51.2 L831.6 57.8"/><path d="M826.2 73.4 Q826.2 66.6 832 66.6 H840.6"/><path d="M835.6 61.6 L841.4 66.6 L835.6 71.6"/></g>
<path d="M850 46.5 H880.5" stroke="#a0a0a0" stroke-width="1"/>
<rect x="850" y="62" width="30" height="16" fill="#ffffaa"/>
</svg>
<span class="w" style="left:850.80px;top:50px;font-size:11px;transform:scaleX(0.8875);">GOTO</span>
<span class="w" style="left:852.00px;top:65px;font-size:11px;transform:scaleX(0.8333);">0</span>
<span class="w" style="left:866.30px;top:65px;font-size:11px;transform:scaleX(1.0020);">06</span>
<div class="btn" style="left:5px;top:84px;width:83px;height:21px;"></div>
<span class="w" style="left:21.12px;top:89px;transform:scaleX(0.8800);">PGC</span>
<div class="abs" style="left:65px;top:92px;width:15px;height:5px;border:1px solid;border-color:#fff #696969 #696969 #fff;background:#f0f0f0"></div>
<div class="chk" style="left:93px;top:88px"></div>
<svg class="abs" style="left:111px;top:87px" width="8" height="15"><path d="M0 .7 L7.4 7.4 L0 14.1 Z" fill="#000"/></svg>
<div class="sunk" style="left:129px;top:84px;width:1133px;height:21px"></div>
<span class="w" style="left:522.50px;top:89px;transform:scaleX(0.9182);">VTSM</span>
<span class="w" style="left:554.63px;top:89px;transform:scaleX(0.8667);">1</span>
<span class="w" style="left:564.30px;top:89px;transform:scaleX(1.0020);">,</span>
<span class="w" style="left:571.16px;top:89px;transform:scaleX(0.8429);">LU</span>
<span class="w" style="left:586.03px;top:89px;transform:scaleX(0.9667);">1</span>
<span class="w" style="left:598.00px;top:89px;transform:scaleX(0.8905);">(en)</span>
<span class="w" style="left:620.30px;top:89px;transform:scaleX(1.0020);">,</span>
<span class="w" style="left:626.60px;top:89px;transform:scaleX(0.7571);">5</span>
<span class="w" style="left:639.80px;top:89px;transform:scaleX(0.8935);">(0:00)</span>
<span class="w" style="left:1066.70px;top:89px;transform:scaleX(0.9569);">Chapters:</span>
<span class="w" style="left:1119.40px;top:89px;transform:scaleX(1.0316);">n/a,</span>
<span class="w" style="left:1145.74px;top:89px;transform:scaleX(0.9630);">Programs:</span>
<span class="w" style="left:1201.75px;top:89px;transform:scaleX(0.9500);">1,</span>
<span class="w" style="left:1218.90px;top:89px;transform:scaleX(0.9000);">Cells:</span>
<span class="w" style="left:1247.65px;top:89px;transform:scaleX(0.8500);">1</span>
<div class="btn" style="left:1268px;top:84px;width:94px;height:22px"></div>
<span class="w" style="left:1282.50px;top:89px;transform:scaleX(0.9776);">Scratchbook</span>
<div class="abs" style="left:4px;top:108px;width:256px;height:539px;background:#fff;border:1px solid;border-color:#666;box-shadow:inset 1px 1px 0 #b4b4b4"></div>
<div class="abs" style="left:5px;top:238px;width:253px;height:16px;background:#cacaca;outline:1px dotted #000;outline-offset:-1px"></div>
<span class="w" style="left:6.20px;top:112px;transform:scaleX(0.9333);">VMG</span>
<span class="w" style="left:34.20px;top:112px;transform:scaleX(1.0020);">,</span>
<span class="w" style="left:40.95px;top:112px;transform:scaleX(0.9520);">First-Play</span>
<span class="w" style="left:93.14px;top:112px;transform:scaleX(0.8640);">PGC</span>
<span class="w" style="left:6.20px;top:128px;transform:scaleX(0.9757);">VMGM</span>
<span class="w" style="left:45.20px;top:128px;transform:scaleX(1.0020);">,</span>
<span class="w" style="left:51.91px;top:128px;transform:scaleX(0.8857);">LU</span>
<span class="w" style="left:68.20px;top:128px;transform:scaleX(0.8000);">1</span>
<span class="w" style="left:79.00px;top:128px;transform:scaleX(0.9048);">(en)</span>
<span class="w" style="left:101.30px;top:128px;transform:scaleX(1.0020);">,</span>
<span class="w" style="left:106.62px;top:128px;transform:scaleX(0.8833);">1</span>
<span class="w" style="left:138.70px;top:128px;transform:scaleX(1.0362);">(dummy)</span>
<span class="w" style="left:218.60px;top:128px;transform:scaleX(1.0344);">TitleM</span>
<span class="w" style="left:6.20px;top:144px;transform:scaleX(0.9757);">VMGM</span>
<span class="w" style="left:45.20px;top:144px;transform:scaleX(1.0020);">,</span>
<span class="w" style="left:51.91px;top:144px;transform:scaleX(0.8857);">LU</span>
<span class="w" style="left:68.20px;top:144px;transform:scaleX(0.8000);">1</span>
<span class="w" style="left:79.00px;top:144px;transform:scaleX(0.9048);">(en)</span>
<span class="w" style="left:101.30px;top:144px;transform:scaleX(1.0020);">,</span>
<span class="w" style="left:107.50px;top:144px;transform:scaleX(0.7571);">2</span>
<span class="w" style="left:138.70px;top:144px;transform:scaleX(0.8903);">(0:10)</span>
<span class="w" style="left:6.40px;top:176px;transform:scaleX(0.9121);">VTSM</span>
<span class="w" style="left:38.70px;top:176px;transform:scaleX(0.9000);">1</span>
<span class="w" style="left:48.00px;top:176px;transform:scaleX(1.0020);">,</span>
<span class="w" style="left:54.84px;top:176px;transform:scaleX(0.8643);">LU</span>
<span class="w" style="left:70.27px;top:176px;transform:scaleX(0.9333);">1</span>
<span class="w" style="left:82.00px;top:176px;transform:scaleX(0.8905);">(en)</span>
<span class="w" style="left:104.40px;top:176px;transform:scaleX(1.0020);">,</span>
<span class="w" style="left:109.90px;top:176px;transform:scaleX(0.9000);">1</span>
<span class="w" style="left:138.70px;top:176px;transform:scaleX(1.0362);">(dummy)</span>
<span class="w" style="left:217.57px;top:176px;transform:scaleX(1.0324);">RootM</span>
<span class="w" style="left:6.40px;top:192px;transform:scaleX(0.9121);">VTSM</span>
<span class="w" style="left:38.70px;top:192px;transform:scaleX(0.9000);">1</span>
<span class="w" style="left:48.00px;top:192px;transform:scaleX(1.0020);">,</span>
<span class="w" style="left:54.84px;top:192px;transform:scaleX(0.8643);">LU</span>
<span class="w" style="left:70.27px;top:192px;transform:scaleX(0.9333);">1</span>
<span class="w" style="left:82.00px;top:192px;transform:scaleX(0.8905);">(en)</span>
<span class="w" style="left:104.40px;top:192px;transform:scaleX(1.0020);">,</span>
<span class="w" style="left:110.80px;top:192px;transform:scaleX(0.7714);">2</span>
<span class="w" style="left:138.70px;top:192px;transform:scaleX(0.8903);">(0:44)</span>
<span class="w" style="left:193.90px;top:192px;transform:scaleX(0.9625);">2b.</span>
<span class="w" style="left:6.40px;top:208px;transform:scaleX(0.9121);">VTSM</span>
<span class="w" style="left:38.70px;top:208px;transform:scaleX(0.9000);">1</span>
<span class="w" style="left:48.00px;top:208px;transform:scaleX(1.0020);">,</span>
<span class="w" style="left:54.84px;top:208px;transform:scaleX(0.8643);">LU</span>
<span class="w" style="left:70.27px;top:208px;transform:scaleX(0.9333);">1</span>
<span class="w" style="left:82.00px;top:208px;transform:scaleX(0.8905);">(en)</span>
<span class="w" style="left:104.40px;top:208px;transform:scaleX(1.0020);">,</span>
<span class="w" style="left:110.80px;top:208px;transform:scaleX(0.7714);">3</span>
<span class="w" style="left:138.70px;top:208px;transform:scaleX(0.8903);">(0:44)</span>
<span class="w" style="left:193.90px;top:208px;transform:scaleX(0.9625);">2b.</span>
<span class="w" style="left:6.40px;top:224px;transform:scaleX(0.9121);">VTSM</span>
<span class="w" style="left:38.70px;top:224px;transform:scaleX(0.9000);">1</span>
<span class="w" style="left:48.00px;top:224px;transform:scaleX(1.0020);">,</span>
<span class="w" style="left:54.84px;top:224px;transform:scaleX(0.8643);">LU</span>
<span class="w" style="left:70.27px;top:224px;transform:scaleX(0.9333);">1</span>
<span class="w" style="left:82.00px;top:224px;transform:scaleX(0.8905);">(en)</span>
<span class="w" style="left:104.40px;top:224px;transform:scaleX(1.0020);">,</span>
<span class="w" style="left:110.80px;top:224px;transform:scaleX(0.7714);">4</span>
<span class="w" style="left:138.70px;top:224px;transform:scaleX(0.8903);">(0:00)</span>
<span class="w" style="left:193.90px;top:224px;transform:scaleX(0.9625);">3b.</span>
<span class="w" style="left:6.40px;top:240px;transform:scaleX(0.9121);">VTSM</span>
<span class="w" style="left:38.70px;top:240px;transform:scaleX(0.9000);">1</span>
<span class="w" style="left:48.00px;top:240px;transform:scaleX(1.0020);">,</span>
<span class="w" style="left:54.84px;top:240px;transform:scaleX(0.8643);">LU</span>
<span class="w" style="left:70.27px;top:240px;transform:scaleX(0.9333);">1</span>
<span class="w" style="left:82.00px;top:240px;transform:scaleX(0.8905);">(en)</span>
<span class="w" style="left:104.40px;top:240px;transform:scaleX(1.0020);">,</span>
<span class="w" style="left:110.80px;top:240px;transform:scaleX(0.7714);">5</span>
<span class="w" style="left:138.70px;top:240px;transform:scaleX(0.8903);">(0:00)</span>
<span class="w" style="left:6.40px;top:256px;transform:scaleX(0.8097);">VTST</span>
<span class="w" style="left:34.82px;top:256px;transform:scaleX(0.7833);">1</span>
<span class="w" style="left:44.60px;top:256px;transform:scaleX(1.0020);">,</span>
<span class="w" style="left:50.22px;top:256px;transform:scaleX(0.7833);">1</span>
<span class="w" style="left:80.20px;top:256px;transform:scaleX(0.8609);">TTN</span>
<span class="w" style="left:103.20px;top:256px;transform:scaleX(0.8000);">1</span>
<span class="w" style="left:137.90px;top:256px;transform:scaleX(0.8737);">(27:43)</span>
<span class="w" style="left:217.40px;top:256px;transform:scaleX(1.0091);">Title</span>
<span class="w" style="left:242.17px;top:256px;transform:scaleX(0.8333);">1</span>
<div class="sb" style="left:260px;top:108px;width:17px;height:539px"></div>
<div class="sbb" style="left:260px;top:108px"><i class="au"></i></div>
<div class="sbb" style="left:260px;top:630px"><i class="ad"></i></div>
<div class="abs" style="left:278px;top:109px;width:1066px;height:520px;background:#fff;border-left:1px solid #a0a0a0;border-top:1px solid #a0a0a0"></div>
<div class="row mono" style="top:110px;background:#a2a2a2;color:#fff;">********** pre commands:</div>
<div class="row mono" style="top:126px;">   1  Set gprm(12) =(mov) 1024</div>
<div class="row mono" style="top:142px;">   2  if ( gprm(11) == 11 ) then { Set gprm(12) =(mov) 0 }</div>
<div class="row mono" style="top:158px;">   3  if ( gprm(11) == 10 ) then { Set gprm(12) =(mov) 0 }</div>
<div class="row mono" style="top:174px;">   4  if ( gprm(12) == 0 ) then { Goto line 6 }</div>
<div class="row mono" style="top:190px;">   5  (SetHL_BTN) Set Highlighted Button =(mov) gprm(12)</div>
<div class="row mono" style="top:206px;background:#ffffaa;">   6  Set gprm(11) =(mov) 10</div>
<div class="row mono" style="top:222px;">   7  Set gprm(15) =(mov) 10</div>
<div class="row mono" style="top:238px;background:#efefef;">********** post commands:</div>
<div class="row mono" style="top:254px;">   1  Set gprm(11) =(mov) 11</div>
<div class="row mono" style="top:270px;">   2  LinkPGCN PGC 3</div>
<div class="row mono" style="top:286px;background:#efefef;">********** cell commands:</div>
<div class="sb" style="left:1345px;top:108px;width:17px;height:522px"></div>
<div class="sbb" style="left:1345px;top:108px"><i class="au"></i></div>
<div class="sbb" style="left:1345px;top:613px"><i class="ad"></i></div>
<div class="sb" style="left:277px;top:630px;width:1068px;height:17px"></div>
<div class="sbb" style="left:277px;top:630px"><i class="al"></i></div>
<div class="sbb" style="left:1328px;top:630px"><i class="ar"></i></div>
<div class="btn" style="left:4px;top:650px;width:168px;height:24px"></div>
<span class="w" style="left:62.55px;top:656px;transform:scaleX(1.0021);">Edit Cmd</span>
<div class="btn" style="left:174px;top:650px;width:168px;height:24px"></div>
<span class="w" style="left:228.40px;top:656px;transform:scaleX(0.9898);">Add before</span>
<div class="btn" style="left:344px;top:650px;width:168px;height:24px"></div>
<span class="w" style="left:410.50px;top:656px;transform:scaleX(0.9500);">Delete</span>
<div class="btn" style="left:514px;top:650px;width:168px;height:24px"></div>
<span class="w" style="left:583.85px;top:656px;transform:scaleX(0.9821);">Copy</span>
<div class="btn" style="left:684px;top:650px;width:168px;height:24px"></div>
<span class="w" style="left:758.35px;top:656px;transform:scaleX(0.9737);">Cut</span>
<div class="btn" style="left:854px;top:650px;width:168px;height:24px"></div>
<span class="w" style="left:904.39px;top:656px;transform:scaleX(0.9627);">Paste before</span>
<div class="btn" style="left:1024px;top:650px;width:168px;height:24px"></div>
<span class="w" style="left:1074.57px;top:656px;transform:scaleX(0.9304);">Decr GOTOs</span>
<div class="btn" style="left:1194px;top:650px;width:168px;height:24px"></div>
<span class="w" style="left:1253.42px;top:656px;transform:scaleX(1.0289);">Move up</span>
<div class="btn" style="left:4px;top:676px;width:168px;height:24px"></div>
<span class="w" style="left:64.29px;top:682px;transform:scaleX(0.9143);">Edit PGC</span>
<div class="btn" style="left:174px;top:676px;width:168px;height:24px"></div>
<span class="w" style="left:233.15px;top:682px;transform:scaleX(0.9980);">Add after</span>
<div class="btn" style="left:344px;top:676px;width:168px;height:24px"></div>
<span class="w" style="left:402.00px;top:682px;transform:scaleX(1.0041);">Duplicate</span>
<div class="btn" style="left:514px;top:676px;width:168px;height:24px"></div>
<span class="w" style="left:576.95px;top:682px;transform:scaleX(1.0073);">Append</span>
<div class="btn" style="left:684px;top:676px;width:168px;height:24px"></div>
<span class="w" style="left:732.66px;top:682px;transform:scaleX(0.9444);">Paste replace</span>
<div class="btn" style="left:854px;top:676px;width:168px;height:24px"></div>
<span class="w" style="left:909.55px;top:682px;transform:scaleX(0.9509);">Paste after</span>
<div class="btn" style="left:1024px;top:676px;width:168px;height:24px"></div>
<span class="w" style="left:1076.25px;top:682px;transform:scaleX(0.9500);">Incr GOTOs</span>
<div class="btn" style="left:1194px;top:676px;width:168px;height:24px"></div>
<span class="w" style="left:1245.41px;top:682px;transform:scaleX(1.0383);">Move down</span>
<div class="sunk" style="left:4px;top:703px;width:923px;height:22px;border-color:#6e6e6e #fff #fff #6e6e6e"></div>
<span class="w" style="left:7.84px;top:707px;transform:scaleX(0.9566);">Backup created OK.</span>
<div class="abs" style="left:930px;top:703px;width:188px;height:21px;background:#fff;border:1px solid;border-color:#696969 #fff #fff #696969;box-shadow:inset 1px 1px 0 #000"></div>
<div class="btn" style="left:1122px;top:702px;width:23px;height:23px"></div>
<span class="w" style="left:1127.50px;top:708px;transform:scaleX(0.8571);">&lt;&lt;</span>
<div class="btn" style="left:1148px;top:702px;width:23px;height:23px"></div>
<span class="w" style="left:1157.00px;top:708px;transform:scaleX(0.7143);">&lt;</span>
<div class="btn" style="left:1174px;top:702px;width:23px;height:23px"></div>
<span class="w" style="left:1183.00px;top:708px;transform:scaleX(0.7143);">&gt;</span>
<div class="btn" style="left:1200px;top:702px;width:23px;height:23px"></div>
<span class="w" style="left:1205.50px;top:708px;transform:scaleX(0.8571);">&gt;&gt;</span>
<div class="btn" style="left:1226px;top:702px;width:23px;height:23px"></div>
<span class="w" style="left:1232.00px;top:708px;transform:scaleX(0.9167);">all</span>
<div class="chk" style="left:1253px;top:708px"></div>
<span class="w" style="left:1271.50px;top:708px;transform:scaleX(0.8800);">case</span>
<div class="chk" style="left:1300px;top:708px"></div>
<span class="w" style="left:1318.50px;top:708px;transform:scaleX(0.9205);">reg expr</span>
<div class="abs" style="left:0;top:727px;width:1366px;height:1px;background:#e4e4e4"></div>
<div class="abs" style="left:0;top:728px;width:1366px;height:1px;background:#161616"></div>
<div class="abs" style="left:0;top:729px;width:1366px;height:1px;background:linear-gradient(90deg,#6a6a6a 0,#6a6a6a 122px,#c8c8c8 123px,#c8c8c8 178px,#5a5a5a 179px,#5a5a5a 308px,#c0c0c0 309px,#c0c0c0 342px,#707070 343px,#606060 1100px,#8a6a6a 1366px)"></div>
</body></html>
